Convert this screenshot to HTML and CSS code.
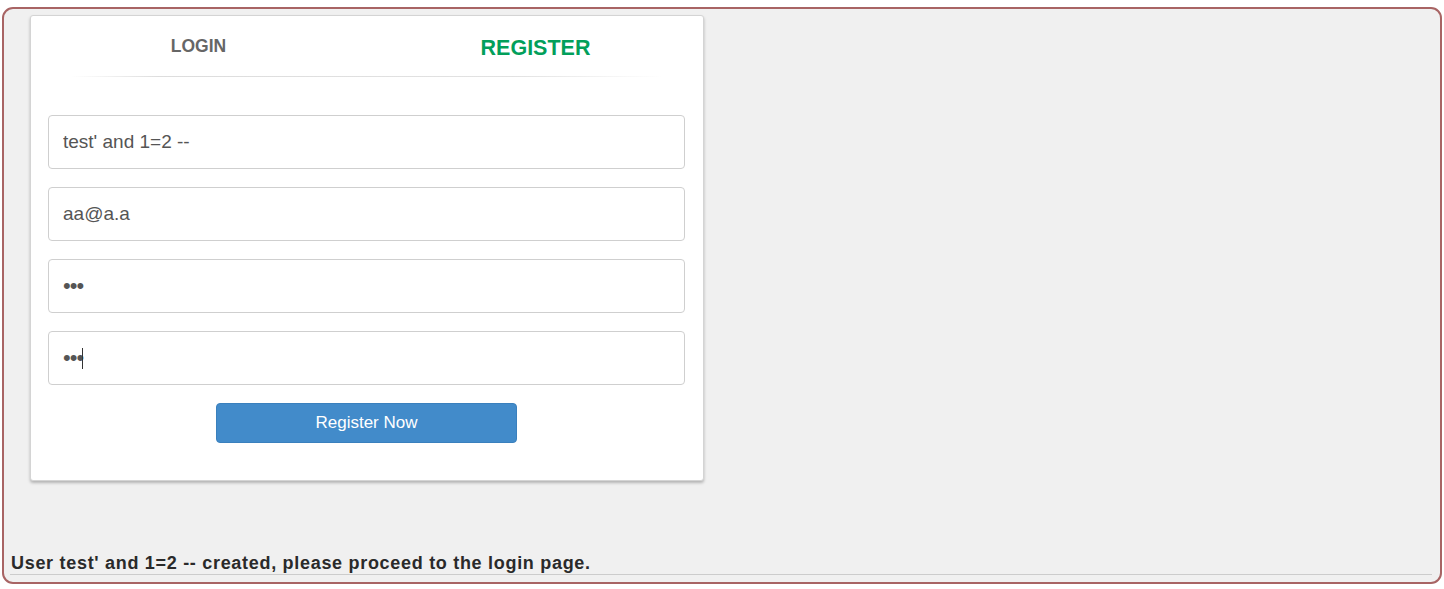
FILE: index.html
```html
<!DOCTYPE html>
<html>
<head>
<meta charset="utf-8">
<link rel="stylesheet" href="styles.css">
</head>
<body>
<div class="frame">
  <div class="card">
    <div class="tabs">
      <div class="tab tab-login">LOGIN</div>
      <div class="tab tab-register">REGISTER</div>
    </div>
    <div class="divider"></div>
    <form class="form">
      <input class="field" type="text" value="test' and 1=2 --">
      <input class="field" type="text" value="aa@a.a">
      <div class="field field-pass"><span class="dots">•••</span></div>
      <div class="field field-pass"><span class="dots">•••</span><span class="caret"></span></div>
      <div class="actions">
        <button class="btn" type="button">Register Now</button>
      </div>
    </form>
  </div>
  <div class="message">User test' and 1=2 -- created, please proceed to the login page.</div>
</div>
</body>
</html>
```
FILE: styles.css
```css
html, body {
  margin: 0;
  padding: 0;
  background: #ffffff;
  font-family: "Liberation Sans", Arial, sans-serif;
}
.frame {
  box-sizing: border-box;
  margin: 7px 2px 0 2px;
  width: 1440px;
  height: 577px;
  border: 2px solid #a86464;
  border-radius: 11px;
  background: #f0f0f0;
  display: flex;
  flex-direction: column;
  padding: 6px 8px 7px 6px;
}
.card {
  box-sizing: border-box;
  margin-left: 20px;
  width: 674px;
  height: 466px;
  background: #fff;
  border: 1px solid #d4d4d4;
  border-radius: 3px;
  box-shadow: 0 2px 3px rgba(0,0,0,0.25);
  display: flex;
  flex-direction: column;
}
.tabs {
  display: flex;
  height: 60px;
}
.tab {
  flex: 1;
  text-align: center;
  font-weight: bold;
}
.tab-login {
  color: #666;
  font-size: 17.5px;
  padding-top: 20px;
  padding-right: 2px;
}
.tab-register {
  color: #029f5b;
  font-size: 21.5px;
  padding-top: 20px;
}
.divider {
  height: 1px;
  margin: 0 40px 0 40px;
  background: linear-gradient(to right, rgba(221,221,221,0), #dddddd 15%, #e2e2e2 75%, rgba(221,221,221,0));
}
.form {
  display: flex;
  flex-direction: column;
  gap: 18px;
  padding: 38px 18px 0 17px;
  margin: 0;
}
.field {
  box-sizing: border-box;
  height: 54px;
  width: 100%;
  border: 1px solid #cfcfcf;
  border-radius: 4px;
  padding: 0 14px;
  font-family: "Liberation Sans", Arial, sans-serif;
  font-size: 19px;
  color: #555;
  background: #fff;
  outline: none;
}
.field-pass {
  display: flex;
  align-items: center;
}
.dots {
  font-size: 22px;
  color: #555;
  letter-spacing: -1px;
}
.caret {
  display: inline-block;
  width: 1px;
  height: 21px;
  background: #333;
  margin-left: -1px;
}
.actions {
  display: flex;
  justify-content: center;
}
.btn {
  box-sizing: border-box;
  width: 301px;
  height: 40px;
  background: #428bca;
  border: 1px solid #3a80bd;
  border-radius: 4px;
  color: #fff;
  font-family: "Liberation Sans", Arial, sans-serif;
  font-size: 17px;
  cursor: pointer;
}
.message {
  margin-top: auto;
  padding-left: 1px;
  font-weight: bold;
  font-size: 18px;
  letter-spacing: 0.7px;
  line-height: 18px;
  color: #2a2a2a;
  padding-bottom: 2px;
  border-bottom: 1px solid #cccccc;
}
```
